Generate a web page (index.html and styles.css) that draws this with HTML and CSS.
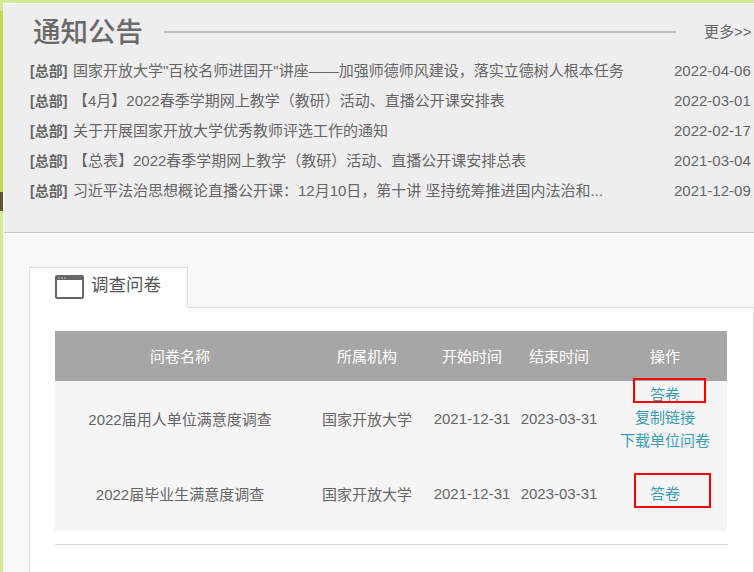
FILE: index.html
```html
<!DOCTYPE html>
<html lang="zh-CN">
<head>
<meta charset="utf-8">
<title>通知公告</title>
<link rel="stylesheet" href="styles.css">
</head>
<body>
<div class="topbar"></div>
<div class="page">
  <div class="side">
    <div class="side-a"></div>
    <div class="side-b"></div>
    <div class="side-c"></div>
    <div class="side-d"></div>
  </div>
  <main class="main">
    <section class="notice">
      <div class="notice-head">
        <h2 class="notice-title">通知公告</h2>
        <div class="notice-line"></div>
        <a class="more">更多&gt;&gt;</a>
      </div>
      <ul class="notice-list">
        <li class="notice-row"><b class="tag">[总部]</b><span class="notice-text">国家开放大学"百校名师进国开"讲座——加强师德师风建设，落实立德树人根本任务</span><span class="date">2022-04-06</span></li>
        <li class="notice-row"><b class="tag">[总部]</b><span class="notice-text">【4月】2022春季学期网上教学（教研）活动、直播公开课安排表</span><span class="date">2022-03-01</span></li>
        <li class="notice-row"><b class="tag">[总部]</b><span class="notice-text">关于开展国家开放大学优秀教师评选工作的通知</span><span class="date">2022-02-17</span></li>
        <li class="notice-row"><b class="tag">[总部]</b><span class="notice-text">【总表】2022春季学期网上教学（教研）活动、直播公开课安排总表</span><span class="date">2021-03-04</span></li>
        <li class="notice-row"><b class="tag">[总部]</b><span class="notice-text">习近平法治思想概论直播公开课：12月10日，第十讲 坚持统筹推进国内法治和...</span><span class="date">2021-12-09</span></li>
      </ul>
    </section>
    <section class="survey">
      <div class="tabbar">
        <div class="tab">
          <svg class="tab-icon" width="29" height="24" viewBox="0 0 29 24" aria-hidden="true">
            <rect x="1" y="1" width="27" height="22" rx="1" fill="#fff" stroke="#666" stroke-width="2"/>
            <rect x="1" y="1" width="27" height="4" fill="#666"/>
            <path d="M3 3h2M6 3h2M9 3h2" stroke="#bbb" stroke-width="1"/>
          </svg>
          <span class="tab-label">调查问卷</span>
        </div>
      </div>
      <div class="survey-body">
        <table class="grid">
          <colgroup>
            <col class="c-name"><col class="c-org"><col class="c-start"><col class="c-end"><col class="c-op">
          </colgroup>
          <thead>
            <tr><th>问卷名称</th><th>所属机构</th><th>开始时间</th><th>结束时间</th><th>操作</th></tr>
          </thead>
          <tbody>
            <tr>
              <td>2022届用人单位满意度调查</td><td>国家开放大学</td><td>2021-12-31</td><td>2023-03-31</td>
              <td class="ops"><a class="op op-first">答卷</a><a class="op">复制链接</a><a class="op">下载单位问卷</a></td>
            </tr>
            <tr>
              <td>2022届毕业生满意度调查</td><td>国家开放大学</td><td>2021-12-31</td><td>2023-03-31</td>
              <td class="ops"><a class="op">答卷</a></td>
            </tr>
          </tbody>
        </table>
        <div class="rule"></div>
        <div class="mark mark-one"></div>
        <div class="mark mark-two"></div>
      </div>
    </section>
  </main>
</div>
</body>
</html>
```

FILE: styles.css
```css
* { box-sizing: border-box; }
html, body { margin: 0; padding: 0; }
body {
  width: 754px;
  height: 572px;
  overflow: hidden;
  background: #fff;
  font-family: "Liberation Sans", "Noto Sans CJK SC", sans-serif;
  font-size: 15px;
  color: #666;
}
.topbar { height: 3px; background: #d4e996; }
.page { display: flex; height: 569px; }
.side { width: 3px; display: flex; flex-direction: column; }
.side-a { height: 8px; background: #d4e996; }
.side-b { height: 181px; background: #c3dc4c; }
.side-c { height: 19px; background: #5c5636; }
.side-d { flex: 1; background: #d4e996; }
.main { flex: 1; padding: 1px 0 0 1px; background: #fff; min-width: 0; }

.notice {
  height: 229px;
  background: #eee;
  border-bottom: 1px solid #c8c8c8;
  padding: 12px 0 0 26px;
}
.notice-head { display: flex; align-items: center; height: 32px; }
.notice-title {
  margin: 0 0 0 3px;
  width: 131px;
  font-size: 27.5px;
  line-height: 32px;
  font-weight: 500;
  color: #6a6a6a;
  padding-top: 2px;
  white-space: nowrap;
}
.notice-line { width: 512px; height: 2px; background: #bbb; }
.more { margin-left: 28px; color: #666; font-size: 15px; white-space: nowrap; padding-bottom: 3px; }

.notice-list { list-style: none; margin: 8px 0 0; padding: 0; }
.notice-row { display: flex; height: 30px; line-height: 30px; white-space: nowrap; }
.tag { width: 43px; color: #666; flex: none; font-size: 14px; }
.notice-text { flex: 1; color: #666; overflow: hidden; font-family: "Liberation Sans", "Noto Sans CJK KR", sans-serif; }
.date { width: 80px; flex: none; color: #666; }

.survey {
  position: relative;
  height: 339px;
  background: #f8f8f8;
  padding: 34px 0 0 25px;
}
.tabbar { height: 41px; display: flex; border-bottom: 1px solid #ddd; }
.tab {
  width: 159px;
  height: 41px;
  display: flex;
  align-items: center;
  gap: 7px;
  padding: 0 0 2px 25px;
  background: #fff;
  border: 1px solid #ddd;
  border-bottom: 0;
}
.tab-icon { flex: none; display: block; }
.tab-label { font-size: 17.5px; color: #555; white-space: nowrap; line-height: 20px; padding-bottom: 4px; }

.survey-body {
  height: 264px;
  background: #fff;
  border-left: 1px solid #ddd;
  border-right: 1px solid #ddd;
  padding: 23px 25px 0 25px;
}
.grid { width: 672px; border-collapse: collapse; table-layout: fixed; }
.c-name { width: 250px; }
.c-org { width: 124px; }
.c-start { width: 86px; }
.c-end { width: 88px; }
.c-op { width: 124px; }
.grid th {
  height: 50px;
  padding: 0 0 1px;
  background: #a6a6a6;
  color: #fff;
  font-weight: 400;
  text-align: center;
}
.grid td {
  height: 75px;
  padding: 0 0 1px;
  background: #f5f5f5;
  color: #666;
  text-align: center;
}
.ops { vertical-align: middle; }
.op { display: block; line-height: 23px; color: #3b9db5; }
.op-first { margin-top: -1px; }
.rule { width: 673px; height: 1px; margin-top: 13px; background: #d6d6d6; }

.mark {
  position: absolute;
  border: 2px solid #f00;
  pointer-events: none;
}
.mark-one { left: 629px; top: 145px; width: 73px; height: 25px; }
.mark-two { left: 630px; top: 240px; width: 77px; height: 35px; }
```
